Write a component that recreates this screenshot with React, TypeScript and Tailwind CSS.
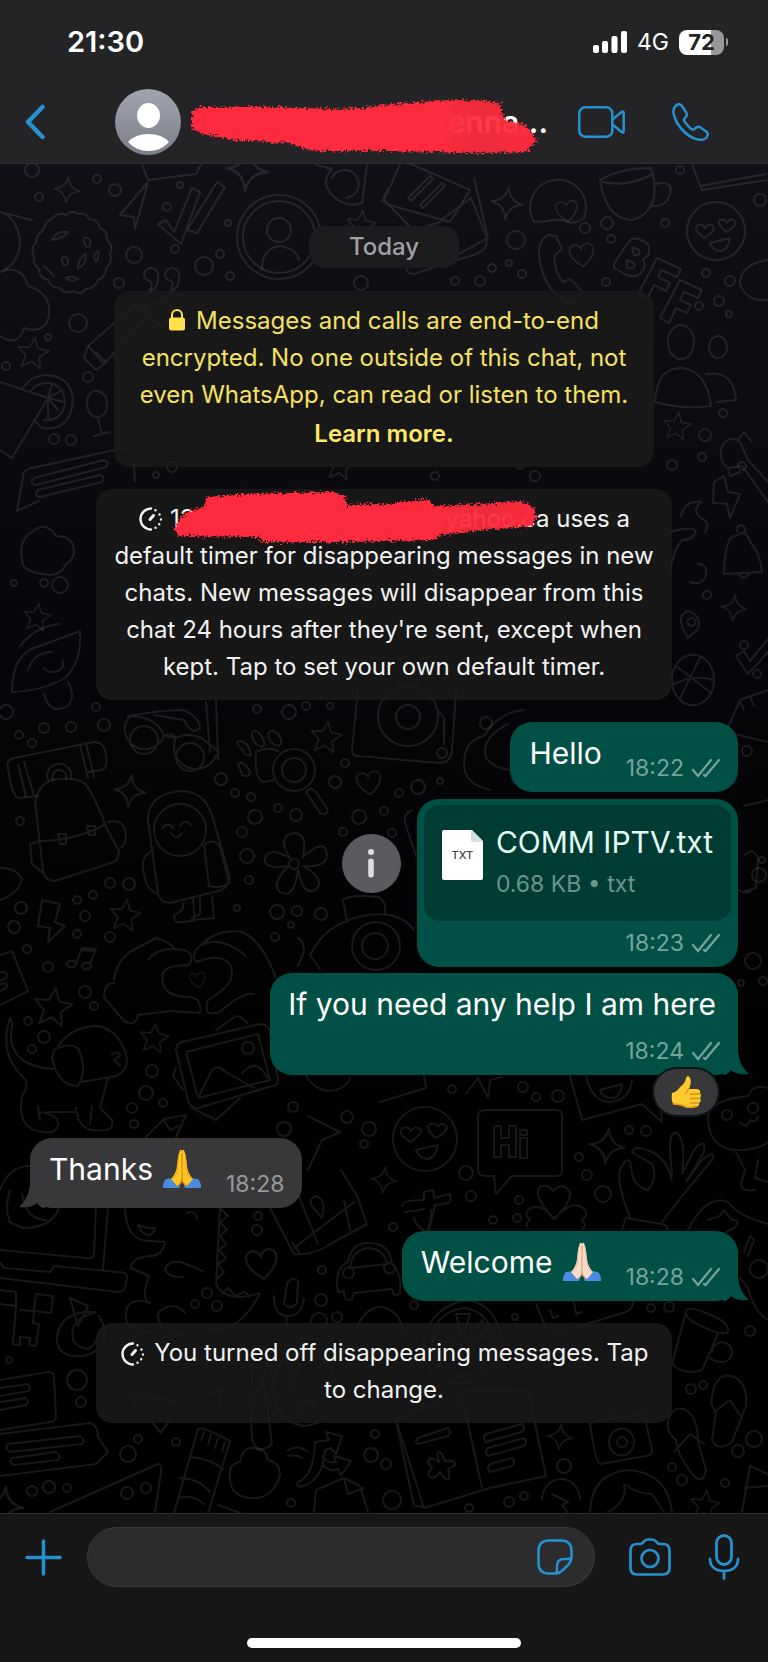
import type { ReactNode } from "react";

const STAR = "M0-18 5-6 18-5 8 4 11 17 0 10-11 17-8 4-18-5-5-6Z";
const SPARKLE = "M0-16Q2-2 16 0Q2 2 0 16Q-2 2-16 0Q-2-2 0-16Z";
const HEART = "M0 13C-18 0-15-12-7-12-3-12 0-9 0-6 0-9 3-12 7-12 15-12 18 0 0 13Z";

// x, y, radius
const bubbles = [
  [32,170,7],[97,179,4],[115,190,6],[39,197,4],[180,185,3],[167,207,4],[228,223,3],[134,255,8],[175,249,4],[204,266,9],
  [220,254,4],[230,276,4],[119,283,5],[78,323,9],[48,337,3],[6,366,4],[88,377,5],[54,439,5],[71,440,5],[156,475,3],
  [172,467,5],[14,583,3],[44,583,4],[60,585,8],[361,283,7],[455,281,4],[480,281,5],[492,268,4],[509,263,3],[522,274,4],
  [516,240,9],[585,228,5],[607,223,6],[611,239,4],[606,282,4],[665,223,4],[680,170,4],[706,273,4],[760,200,6],[730,281,5],
  [719,301,5],[699,306,4],[729,314,3],[723,413,4],[705,435,6],[702,457,4],[672,465,5],[742,466,4],[535,476,5],[520,466,3],
  [435,476,4],[707,595,4],[744,645,4],[757,674,4],[6,712,7],[19,735,4],[32,743,4],[44,728,5],[71,727,5],[104,725,6],
  [96,707,4],[221,779,6],[235,793,4],[251,797,4],[255,817,7],[278,808,4],[296,815,6],[242,832,5],[247,856,7],[249,880,4],
  [237,908,3],[277,912,7],[297,911,5],[321,914,6],[291,925,3],[275,937,4],[257,709,4],[289,712,7],[306,706,4],[330,706,3],
  [345,763,4],[335,782,6],[399,793,4],[359,817,7],[384,811,4],[343,832,4],[392,833,4],[20,821,4],[110,883,5],[129,884,6],
  [93,895,4],[77,900,4],[85,916,5],[21,908,6],[14,927,6],[77,934,4],[110,937,5],[27,949,4],[48,967,5],[85,992,6],
  [94,1006,4],[28,1021,4],[44,1037,6],[32,1049,4],[152,1071,6],[146,1093,7],[132,1108,5],[163,1103,4],[134,1124,4],[293,1107,5],
  [347,1117,6],[369,1129,7],[284,1129,7],[364,1144,4],[747,751,5],[762,860,3],[759,875,7],[753,961,8],[741,983,3],[763,981,4],
  [418,787,7],[486,723,6],[440,781,3],[452,1089,4],[523,1087,5],[536,1097,4],[558,1096,6],[629,1130,4],[646,1131,5],[579,1157,4],
  [587,1175,5],[603,1194,8],[466,1173,7],[471,1196,5],[519,1200,4],[493,1220,4],[517,1218,4],[393,1227,4],[414,1305,4],[515,1317,3],
  [651,1308,4],[669,1307,5],[759,1269,9],[750,1331,5],[691,1389,5],[703,1385,4],[258,1216,4],[257,1230,5],[207,1293,5],[195,1304,4],
  [217,1306,5],[322,1270,4],[321,1300,6],[337,1317,5],[319,1321,8],[9,1360,3],[77,1380,10],[81,1402,5],[138,1439,4],
  [128,1454,8],[176,1442,4],[32,1491,5],[49,1487,6],[67,1488,4],[127,1493,6],[146,1488,5],[375,1434,4],[371,1455,7],[386,1464,5],
  [291,1503,4],[392,1500,9],[469,1508,4],[509,1502,5],[524,1496,4],[564,1466,7],[672,1467,4],[682,1480,5],[725,1483,4],[738,1451,6],
  [754,1439,8],
];

// x, y, scale
const stars = [[33,353,0.85],[37,617,0.75],[326,737,0.85],[125,915,0.85],[53,1007,1.05],[154,1038,0.8],[677,426,0.75],[340,465,0.8],[361,225,0.8],[705,1505,0.8],[283,1372,0.9]];
const sparkles = [[67,190,0.8],[247,170,1.3],[507,203,1],[130,791,1],[734,608,0.8],[607,1146,1.1],[384,1180,0.8],[560,1437,0.8],[544,441,0.8],[4,1506,1.2]];
const hearts = [[369,783,0.9],[262,1264,1.15],[582,255,0.9],[198,980,0.6],[567,211,0.8],[160,313,1]];

const doodles = [
  // ticks, paper plane, quotes
  "M158 224l8-4 8 12 18-44 8 4-19 52zM187 230l10 3 28-46-8-5zM148 182l-28 33 14 2 1 12z",
  "M144 275a7 7 0 1 1 14 0q1 14-9 17 5-8 1-11a7 7 0 0 1-6-6zM165 275a7 7 0 1 1 14 0q1 14-9 17 5-8 1-11a7 7 0 0 1-6-6z",
  // envelope and letter
  "M402 160l-18 40 60 62 44-24-14-60M402 160l68 30-20 32-64-18M388 188l-6 14M420 205l22-22 3 3-22 22zM408 198l22-22 3 3-22 22zM440 222l-30 10-4 34q0 8 8 8l62-20q12-4 11-16l-16-40-30 22",
  // glasses at the top, handset
  "M316 165l16 4q-12 12 0 26 14 14 30 8l5-38M332 178a14 14 0 1 1 14 20M140 160l8 20 48-6 8-16M548 235q-12 6-8 28 6 28 24 36 4 6 12 2l6-10-12-12-7 3q-10-12-8-27l7-6-6-13z",
  // chat ball, mug and cake
  "M534 222a28 28 0 1 1 50-4q-8 6-16 4-10-4-20-1zM600 180q20-12 50-12 6 10 4 30-6 20-24 22-24-2-30-40zM603 182q24 6 50-8M656 184q18-4 14 10-4 14-20 12M692 164l10 26 66-10M700 186l66-12",
  // BFF
  "M628 243q3-6 11-4 12 4 10 12 0 6-6 8 4 8-2 14-6 6-16 1l-9-5q-4-2-1-7zM632 247l7 3q2 6-5 5zM627 260l7 3q2 7-7 5zM657 258l24 11-4 8-16-7-3 7 12 6-4 8-12-6-7 14-9-5zM680 280l22 10-4 8-14-6-4 8 11 5-4 8-11-5-7 15-9-5z",
  // cloud and pencil
  "M0 272q22-8 28 14 26 8 20 34-6 14-24 8-6 20-24 8M138 302l-50 44 16 18 42-46zM88 346l-4 12 12 12 8-6M96 352l10 10",
  // pizza, lemon and glass
  "M0 382l48 16-36 60-12-8M22 390q10-18 32-14 22 6 18 32-6 24-30 20l-8-8M30 392q8-12 24-8 14 8 10 24-6 14-20 12M48 398l4-14M48 398l14-8M48 398l16 4M48 398l10 12M48 398v20M88 396q-4 20 10 21 12-2 8-20-10-12-18-1zM98 418l4 16M94 436l16-4",
  // text balloons
  "M32 468l92-20q8 0 9 8l2 25M32 468q-10 2-9 9l-6 34 22-10M34 478l70-18q6 2 2 7l-70 18q-7-1-2-7zM38 490l62-15q6 2 2 7l-62 15q-7-1-2-7z",
  "M22 560q-4-20 10-28 14-12 24 4 18 0 18 16-2 10-8 12-6 14-22 10-22-2-22-14z",
  // saucer
  "M12 692q0-40 28-46l40-15q2 30-14 46-22 14-54 15zM20 646q16-20 40-22M28 670q6-18 24-18M44 694q6 22 24 12 8-10 0-24M44 668a10 8 0 1 0 18-8",
  // people
  "M668 342a13 17 0 1 1 26 0 13 17 0 1 1-26 0zM655 402q2-36 28-34 24 4 28 38-26 4-56-4zM709 346a9 11 0 1 1 18 2 9 11 0 1 1-18-2zM706 374q28-4 30 26l-20 2",
  // guitar, bolt
  "M722 446q8-12 18-4l8 18 20 22M722 446q-4 16 6 22l14-2 26 36M738 440l6-8 8 10M728 468l2 8 10-4M714 482l10-6 4 16 12 2-10 24-3-14-14-1z",
  "M664 536q16-10 32-6-2 10-14 10-10 12-12 34M698 564q10 0 8 12-4 10-16 6M681 516q4-16 20-14-10 8 0 16 10 4 4 14",
  "M724 570q2-36 12-34 10-8 14 6 10 10 12 30l-38 2zM738 532a4 4 0 1 1 6 0M738 574q6 8 12-1M688 638q-14-22 0-27 14 4 10 18zM692 618a4 4 0 1 1-1 0M736 656l8-5 6 10 18-22M736 656l12 18 20-22",
  // ball and tape
  "M672 682a20 24 0 1 1 42-4 20 24 0 1 1-42 4zM676 666l34 26M700 658l-20 40M674 684q20-10 40-4M768 690l-28 10-14 32 42 10M750 696l4 10M740 702l4 8",
  // backpack
  "M8 768q-2-8 6-10l80-16q10 0 12 12 2 14-4 16l-14 2M8 768q4 30 12 30l18-2M18 764l8 33M24 762l10 34M80 745l8 33M86 743l8 34M48 780a12 12 0 1 1 23-2M53 780a7 7 0 1 1 13-1",
  "M37 795q6-16 24-16 22-2 28 10 14 26 16 36l14 26q0 10-8 12l-56 18q-10 0-12-10l-8-70zM38 841q36 0 66-16M38 842l-8 2 2 20 10 8M108 822q16-4 18 12 0 12-6 14M58 834h8v10h-6zM87 826h8v9h-6z",
  // sunglasses
  "M128 716q34-6 56-6 16 8 16 18-8 8-16-8l-30-5M126 722a20 20 0 1 0 38 14q8-4 12 2a20 20 0 1 0 40 18l3-4-17-14q-16-6-26 0l-12-2q-8-20-34-20zM144 740m-14 0a14 14 0 1 0 28 0 14 14 0 1 0-28 0M190 757m-14 0a14 14 0 1 0 28 0 14 14 0 1 0-28 0M206 702l4 50M216 700l2 60",
  // paw and magnifier
  "M256 752q12-6 22-1M256 752q-2 28 8 30l10-2M243 750q-10-8-3-9 10 2 11 14-6 2-8-5zM252 736q0-10 9-1 6 10 1 12-8-2-10-11zM268 735q2-8 10-1 6 8 1 12-10-2-11-11zM238 764q6-4 12 8 0 6-8 3zM272 770m21 0m-20 0a21 21 0 1 0 42 0 21 21 0 1 0-42 0M282 770a12 12 0 1 0 24 0 12 12 0 1 0-24 0M306 792q4-6 10 0l12 18q-2 6-8 3z",
  // astronaut
  "M148 820q0-26 32-29 24 0 32 24l18 62q-4 14-12 14l-48 12q-10 0-12-10zM154 830a26 26 0 1 0 52 0 26 26 0 1 0-52 0M163 828q4-7 10 0M180 826q5-8 11-1M171 833q6 8 11 0M204 845q10-8 16 2l9 36q-8 6-20 3zM150 852q-10 6-6 22 2 16 14 20M184 902l-2 8-8 6q0 8 8 6l12-1v-8l-1-14M200 898v16l-8 4M212 896l2 22-22 2",
  // flower
  "M290 858q-14-22 4-25 14 0 9 24 22-20 24-3 0 14-24 12 24 14 12 24-12 6-17-20-4 30-18 22-10-8 9-26-26 4-24-8 4-12 25 0zM294 864m-5 0a5 5 0 1 0 10 0 5 5 0 1 0-10 0",
  // bolt, notes
  "M42 900l18 4-5 18 10 4-17 16 2-14-12-2zM76 964l6-16 14 1-6 15M82 950l12 1M67 964a4 3 0 1 0 9 0 4 3 0 1 0-9 0M82 966a4 3 0 1 0 9 0 4 3 0 1 0-9 0",
  // heart hands
  "M114 980q2-18 16-28l26-14q14 4 20 12M148 960q10-14 36-10 12 4 5 15-22 0-26 8-4 22 22 24 18-1 15 16l-30-2-32 4q-2 12-14 6l-20-24q0-14 10-14M202 944q16-16 40-12 20 8 34 46M202 944q-12 10-6 18l14-4q22-2 22 16 0 12-24 26-6 18 12 12 22-20 34-18M204 944q18-8 42 12",
  // telephone
  "M343 900q6-6 36-3 8 6 6 16M343 900l4 22M310 955q20-40 72-41 22 2 32 16M310 955l10 14M298 938q6 2 6 14l-6 14M352 946a24 24 0 1 0 48 0 24 24 0 1 0-48 0M362 946a13 13 0 1 0 26 0 13 13 0 1 0-26 0",
  // turntable
  "M358 690l-6 60q0 6 6 6l82 7q10 0 12-12l4-60M378 716a30 30 0 1 0 60 0 30 30 0 1 0-60 0M396 717a12 12 0 1 0 24 0 12 12 0 1 0-24 0M436 708l8 10v26M442 748a5 5 0 1 0 .1 0",
  // headphones and blanket
  "M490 790q-26-6-26-26 0-24 20-28 14-24 40-26M508 724q-28 14-22 34 8 10 24 12M412 810q-10 4-6 16l10 30",
  "M744 806l24-6M744 856q8-10 14 2l-2 30-14 4M738 890q10 6 14-1",
  "M0 868q18 0 22 12-4 14-22 20M0 955l12-4 16 40-28 14M0 972q10 0 6 6l-6 3M0 984q10-2 6 4l-6 3",
  // dog
  "M10 1018q-12 36 14 60 6 6-2 18-6 36 24 36 12 2 12-10l-2-4q-8-6-18-6M10 1018q4 4 1 14-2 34 42 37M58 1046q14-20 40-20 20 4 28 28 4 16-10 22l-34 6M54 1050q14-8 24-2 10 22 0 38-20 0-26-28zM108 1078l-8 30 12 12q2 10-8 10-26 4-28-22M92 1106l-2 18M38 1106l2 14M48 1112q10 0 26 0M112 1054q8-4 8 2l-6 4 6 6",
  // picture frame
  "M176 1050q0-6 6-8l78-18q8 0 10 8l8 48q0 6-6 6l-74 22q-8 0-10-8zM186 1052l72-18 12 46-72 18zM198 1098l14-28q6-6 14 2l28 16M242 1074q10-14 20-4l6 8M242 1048a6 6 0 1 0 12 0 6 6 0 1 0-12 0M216 1030l20-14q6 0 12 8M176 1068l-3 8 10 14M192 1108l24 12 24-22",
  "M146 1137l18-18 22-4-10 22M164 1120l6 10 8-4M308 1116l32 16-18 8-14 30M306 1076q12 18 30 14 12-4 14-12",
  // faces, Hi card
  "M393 1139a32 32 0 1 0 64 0 32 32 0 1 0-64 0M416 1150l22-5q-2 12-10 14-8 0-12-9zM410 1142q-14-10-7-14 6-2 8 3 4-6 9-2 4 4-10 13zM436 1138q-12-10-6-14 6-2 8 3 4-6 8-1 4 4-10 12z",
  "M486 1110h70q6 0 6 6v54q0 6-6 6h-44l-16 18-2-18h-8q-8 0-8-6v-54q0-6 8-6zM494 1126h7v12h8v-12h7v31h-7v-12h-8v12h-7zM520 1138h7v20h-7zM520 1130h7v5h-7z",
  "M570 1076l12 44 60-16 20 18-4-40M586 1076q6 26 24 26 20-2 22-22M600 1090l22-6q-2 14-10 14-10 0-12-8M424 1076l2 12-46 14M466 1094l12-16 10 20 2-18 12-3",
  "M402 1206q0-6 22-6v-8l9-2 1 8 16-4q2 8-2 9l-13 2-6 26M424 1209q-8 2-19 3M414 1218q2 8 12 14 6-8 5-22",
  // clover
  "M554 1219q-22-24-14-32 8-4 13 4 10-10 17 1 2 10-16 27 20-22 31-9 4 6-3 10 6 6 0 9M554 1219q-14-18-26-9-4 6 2 9-6 6-2 9",
  // ok hand
  "M630 1218q-14-36-10-48 10-22 12 4 4 14 16 16 10-12 4-26l-20-12q2-8 20 0 14 6 20 28M672 1176l-2-26q0-22 8-16 8 8 4 40l12-24q12-14 10 2l-18 30 16-22q14-12 10 0l-30 36-20 26M626 1218l36 6q6 2 6 6M626 1218l-4 12",
  // hamster, controller
  "M708 1116q2-16 40-20 4-12 20-8M708 1116q0 34 30 34 20 0 30-8M735 1150l10 20-4 14q0 8 14 6M758 1160l-3 18 13 4M740 1122q6 8 10-2 6 4 8-4M722 1115a5 5 0 1 0 10 0 5 5 0 1 0-10 0M748 1108a5 5 0 1 0 10 0 5 5 0 1 0-10 0",
  "M688 1230q18-36 40-28 10 14 40 22M708 1220l12-4 4-6 8 10q10 0 2 8l-8 4M744 1252l6-16 4 4-6 16M740 1278l8 10q6 24 20 32",
  // laptop and logo
  "M10 1222q-6-14 0-32M0 1190q10-26 34-24 28 6 27 34-4 28-38 28l-14-6M22 1194q4 26 24 26M96 1206l-2 46q0 8-8 6l-86-8M108 1206l-5 64M0 1262l4 6 46 4 4-6 64 6q12 0 8 10 0 10-8 10l-118-14M0 1290l16 2v14l-16-2M36 1294l17 2-2 17-17-2zM16 1306l-3 38 7 1v-8l10 1-1 7 7 1 3-22-6-1 1-12-14-1",
  "M96 1312q-34-2-39 24-2 22 26 20 22-4 22-28l-6-12M96 1312q-30 8-22 30 16 16 24-6M70 1298l18 8-10 20z",
  // dinosaur
  "M125 1206q0 34 24 35l16 1q-2 14-16 14-18 2-18 12l18 8q-8 24 0 26M138 1225q8 4 17 3-2 8-8 7-6-2-9-10zM220 1208l-4 76q10 20 44 9-20 40-50 36M187 1213q8-4 10 6M220 1208l8 8-8 6 7 8-7 6 6 8-7 6 7 8-8 6 6 8-6 6M165 1270q2-10 16-8l22 9M165 1270q4 8 18 7M150 1303q-26-8-24 16 2 14 34 14M185 1313q-12-14-27 0 0 22 26 22M222 1294l6-6 8 8 8-4 6 4",
  // folded map
  "M270 1208l24 46q20 2 40-12l33-18-10-28-16-26M294 1248l60-46M300 1254l-8-12M316 1211q-10-10-1-15 12 2 7 22zM318 1244l-28-70M344 1200l6 30",
  // car and mic
  "M338 1292q-4-24 10-30 4-20 20-19 22 0 24 21 10 8 8 30l-6 1-2-6-38 4-2 6q-8 4-8-8zM350 1268l38-4q-6-16-20-16-16 2-18 20zM343 1273a5 5 0 1 0 11 0 5 5 0 1 0-11 0M384 1268a5 5 0 1 0 11 0 5 5 0 1 0-11 0",
  "M284 1304l3-20q4-8 11-3l-1 22q-6 8-13 1zM274 1296q0 20 14 20 14 0 16-18M287 1316l-1 10",
  "M354 1334q10-28 28-27 20 4 21 28M424 1352q-2-40 40-52 34 2 38 44-8 38-42 40-34-4-36-32zM432 1346q-2-32 32-38 28 4 30 36-8 30-34 32-26-4-28-30zM462 1340l-6-26h14zM466 1344l16-24 8 16zM456 1344l-16-20-6 16z",
  "M536 1304l10 24q6 8 14 4l66-20q10-6 6-12M550 1310l3 8 5-2M574 1302l2 12 6-2",
  // cup
  "M686 1310q6-4 22 4 22 8 20 18-8 4-22-4-22-8-20-18zM686 1312l-14 52q12 12 30 6l16-36M712 1352a10 10 0 1 1 12 10q-10 0-14-4",
  // under the last notice
  "M127 1393l54 10-20 30zM210 1394l12-4-4 20M254 1390q-8-40 6-44 14 6 0 44zM250 1390l2 50q6 16 20 4l-8-60M274 1396q-4-40 30-44 30 4 32 40-4 32-32 34-26-4-30-30zM296 1404l20-4q-4 18-14 14z",
  "M0 1380l48-8q6 0 6 6l2 38q0 6-6 6l-50 8M0 1388l28-4q4 4 0 7l-28 5M0 1402l26-4q4 4 0 7l-26 5M0 1434l90-11q8 2 8 14l10 15-12 12-96 12M8 1444l72-8q6 4 2 8l-72 8q-6-4-2-8zM12 1458l44-6q6 4 2 8l-44 5q-6-3-2-7z",
  // sock, cloud, crossing arrows
  "M198 1429q4-3 32 12l-22 72M198 1429l-24 84M204 1432l-3 8M211 1435l-3 10M218 1438l-3 10M225 1442l-3 9M191 1457q20 2 32 12M180 1478q18 0 30 14M178 1498q14-4 26 6M50 1512l108-48q4 0 3 8l-6 40M230 1478q-2-14 10-16 4-20 20-12 6 0 8 10 12 2 12 16-8 24-30 22-20-2-20-20z",
  "M298 1482q16-6 17-40l14-2-3-8 16 4-6 18-5-6-6 2q-2 30-22 36-8 2-5-4zM288 1450q10-6 20 2M288 1456q8-2 14 2M322 1456q6 8 14 6l-2-6 17 5-10 14-3-6q-10 4-16-6",
  // journal
  "M396 1420l66-28 66-2 18 86-56 12-66 20zM396 1420l18 86 10 1M462 1396l20 92M418 1438l30-10q4 4 0 8l-30 8q-4-2 0-6zM486 1434l36-10q4 4 0 8l-36 10q-4-4 0-8zM488 1448l36-10q4 4 0 8l-36 10q-4-4 0-8zM490 1464l22-6q4 4 0 8l-22 6q-4-4 0-8zM439 1462q-4-14 3-8l3 7q10-2 10 4l-7 4q4 12-3 10l-5-7q-8 10-12 2l4-7q-8-6 0-9z",
  // camera, slippers
  "M590 1424q4-4 54-10l8 36q0 6-6 6l-46 8q-4 0-10-40zM609 1442a12 13 0 1 0 25 0 12 13 0 1 0-25 0M617 1442a5 5 0 1 0 10 0 5 5 0 1 0-10 0M606 1420l-2-8 14-2",
  "M668 1422q4-18 18-12 12 8 12 32l8 28q-2 12-10 8-18-20-20-38-10-8-8-18zM674 1452l16-18 14 10M712 1396q4-24 20-20 16 6 14 30l-14 36q-14 10-20-2l4-28q-6-6-4-16zM714 1412l16-12 12 18",
  "M542 1500a18 20 0 1 1 38 0M552 1494l16 8-6 3 6 8M590 1512q2-40 40-42 38 4 42 42M608 1512q20-10 16-28 14 10 28 10l12 18M750 1466l18 8M750 1466l-8 46M744 1488l24-2M314 1512l2-22 28-12 16 8 8 26M344 1478l4 16 16-6M218 1505l22 8",
];

function Wallpaper() {
  return (
    <svg
      viewBox="0 164 768 1349"
      preserveAspectRatio="xMidYMin slice"
      className="absolute inset-0 h-full w-full"
      fill="none"
      stroke="#fff"
      strokeOpacity="0.095"
      strokeWidth="2"
      strokeLinejoin="round"
      strokeLinecap="round"
      aria-hidden="true"
    >
      {bubbles.map(([x, y, r], i) => (
        <circle key={i} cx={x} cy={y} r={r} />
      ))}
      {stars.map(([x, y, s]) => (
        <path key={`${x}-${y}`} d={STAR} transform={`translate(${x} ${y}) rotate(8) scale(${s})`} />
      ))}
      {sparkles.map(([x, y, s]) => (
        <path key={`${x}-${y}`} d={SPARKLE} transform={`translate(${x} ${y}) rotate(6) scale(${s})`} />
      ))}
      {hearts.map(([x, y, s]) => (
        <path key={`${x}-${y}`} d={HEART} transform={`translate(${x} ${y}) rotate(-8) scale(${s})`} />
      ))}
      {/* cookie */}
      <path d="M52 219q6-8 14-4 6-6 12-1 8-2 11 5 9 0 11 9 8 3 7 12 7 6 3 14 3 9-4 14 0 9-8 12-3 9-12 9-6 7-13 2-8 4-13-3-9 0-12-8-9-2-9-11-7-5-5-13-4-8 2-13 0-9 7-12 1-9 9-12z" />
      <path d="M52 240q4-10 16-8-4 6-16 8zM84 238q8-2 6 8-6 4-6-8zM62 258q6-4 6 6-6 4-6-6zM78 268q0-10 8-14 0 12-8 14zM94 256q6-10 4 2-2 8-4-2zM66 278q6-3 12 1-6 4-12-1zM44 266l10 10" />
      <path d="M0 212q16 4 20 28 0 22-16 30M0 212l32 8M768 260q-28 4-28 24 6 18 28 16" />
      {/* contact badge */}
      <circle cx="279" cy="237" r="42" />
      <circle cx="279" cy="237" r="36" />
      <circle cx="279" cy="230" r="12" />
      <path d="M262 269q0-21 18-23 16 2 19 14" />
      {/* love eyes */}
      <circle cx="716" cy="231" r="29" />
      <path d="M710 243l20-5q-2 12-9 13-8 0-11-8zM704 238q-12-9-6-13 5-2 7 3 4-6 8-2 4 4-9 12zM726 232q-10-9-6-12 5-2 7 3 4-6 7-2 4 4-8 11z" />
      {doodles.map((d, i) => (
        <path key={i} d={d} />
      ))}
    </svg>
  );
}

function Ticks() {
  return (
    <svg viewBox="0 0 28 20" className="h-5 w-7" fill="none" stroke="currentColor" strokeWidth="2.2" strokeLinecap="round" role="img" aria-label="Delivered">
      <path d="M1 12l5 6L19 2M12 17l1.500 1L27 2" />
    </svg>
  );
}

function TimerIcon() {
  return (
    <svg viewBox="0 0 24 24" className="inline-block h-6 w-6 shrink-0" fill="none" stroke="currentColor" strokeWidth="2.400" strokeLinecap="round" aria-hidden="true">
      <path d="M13 1.500a10.500 10.500 0 1 0 0 21" />
      <path d="M12 12.500l3.500-4" strokeWidth="3" />
      <path d="M17.500 3.200v0M21.500 7.500v0M23 12.500v0M21.200 17.200v0M17.500 20.800v0" />
    </svg>
  );
}

function Pray({ light = false }: { light?: boolean }) {
  const skin = light ? "#fbdcc5" : "#fdc526";
  const shade = light ? "#d9a58a" : "#df8b06";
  const edge = light ? "#eebfa3" : "#f4a90d";
  return (
    <svg viewBox="0 0 40 40" className="-my-1 h-10 w-10" role="img" aria-label="Folded hands">
      <path d="M1 38q0-5 3-8l8-1 6 8-1 2H1z" fill="#4a8be0" />
      <path d="M39 38q0-5-3-8l-8-1-6 8 1 2h16z" fill="#4a8be0" />
      <path d="M18 1q2-1 2 2v27q-1 5-5 7l-6-7q5-5 6-13 1-11 3-16z" fill={skin} />
      <path d="M22 1q-2-1-2 2v27q1 5 5 7l6-7q-5-5-6-13-1-11-3-16z" fill={skin} />
      <path d="M20 4v25M15 37q5-2 5-8 0 6 5 8" fill="none" stroke={shade} strokeWidth="1.200" />
      <path d="M17 5q-1 6-1 13-1 8-5 12M23 5q1 6 1 13 1 8 5 12" fill="none" stroke={edge} strokeWidth="1" />
    </svg>
  );
}

function ThumbsUp() {
  return (
    <svg viewBox="0 0 32 32" className="h-8 w-8" role="img" aria-label="Thumbs up">
      <path d="M2 17q-1 7 1 11 8 0 13 3 5 1 10 0 4-1 3-4 3-2 1-5 2-3 0-5 1-4-4-4h-7q3-7 1-11-2-4-4 0-1 6-6 9-3 5-8 6z" fill="#fdcb2d" />
      <path d="M20 18h10M20 22.500h10M20 27h9M19 13q-3 2-3 5" fill="none" stroke="#dd8f14" strokeWidth="1.300" />
      <path d="M3 28q8 0 13 3 6 1 11-1" fill="none" stroke="#e89b17" strokeWidth="1.500" />
    </svg>
  );
}

function Stamp({ time, ticks = true }: { time: string; ticks?: boolean }) {
  return (
    <span className="flex items-center gap-2 text-[23px] leading-[22px]">
      <time>{time}</time>
      {ticks && <Ticks />}
    </span>
  );
}

function Tail({ side }: { side: "left" | "right" }) {
  return (
    <svg
      viewBox="0 0 26 26"
      className={
        side === "right"
          ? "absolute -right-[11px] bottom-0 h-[26px] w-[26px] fill-[#005045]"
          : "absolute -left-[11px] bottom-0 h-[26px] w-[26px] -scale-x-100 fill-[#38383a]"
      }
      aria-hidden="true"
    >
      <path d="M0 26V0H15C15 11 20 20 26 25C19 26 12 25 8 21C6 24 3 26 0 26Z" />
    </svg>
  );
}

function Bubble({ mine = true, tail = false, className, children }: { mine?: boolean; tail?: boolean; className: string; children: ReactNode }) {
  return (
    <div
      className={
        (mine ? "self-end bg-[#005045] text-[#78a39c] " : "self-start bg-[#38383a] text-[#98989d] ") +
        "relative rounded-[22px] " +
        className
      }
    >
      {tail && <Tail side={mine ? "right" : "left"} />}
      {children}
    </div>
  );
}

const line = "flex items-end gap-6 pt-[13px] pb-[13px] pr-[18px] pl-[19px]";
const body = "text-[30px] leading-9 text-white";
const notice = "self-center rounded-2xl bg-[#1c1c1c]/80 text-center text-2xl leading-[37px]";

function Scribble({ d, id, viewBox, className }: { d: string; id: string; viewBox: string; className: string }) {
  return (
    <svg viewBox={viewBox} className={className} aria-hidden="true">
      <filter id={id} x="-5%" y="-20%" width="110%" height="140%">
        <feTurbulence type="fractalNoise" baseFrequency="0.45" numOctaves="3" seed="4" />
        <feDisplacementMap in="SourceGraphic" scale="9" xChannelSelector="R" yChannelSelector="G" />
      </filter>
      {/* the marker is thinner towards the right end */}
      <linearGradient id={`${id}-ink`}>
        <stop offset="0.7" stopColor="#ff2b3d" />
        <stop offset="0.85" stopColor="#ff2b3d" stopOpacity="0.92" />
        <stop offset="1" stopColor="#ff2b3d" />
      </linearGradient>
      <path d={d} fill={`url(#${id}-ink)`} filter={`url(#${id})`} />
    </svg>
  );
}

function Header() {
  return (
    <header className="border-b border-[#2f2f32] bg-[#242426] pb-[3px]">
      <div className="flex h-[84px] items-center justify-between pr-10 pl-[67px] text-white">
        <time className="text-[29px] font-semibold">21:30</time>
        <div className="flex items-center gap-[10px]">
          <svg viewBox="0 0 34 22" className="h-[22px] w-[34px]" fill="currentColor" role="img" aria-label="Signal">
            <rect x="0" y="14" width="6" height="8" rx="2" />
            <rect x="9" y="10" width="6" height="12" rx="2" />
            <rect x="18.500" y="5" width="6" height="17" rx="2" />
            <rect x="28" y="0" width="6" height="22" rx="2" />
          </svg>
          <span className="text-[23px]">4G</span>
          <div className="flex items-center gap-[2px]">
            <span className="flex h-[25px] w-[45px] items-center justify-center rounded-lg bg-linear-to-r from-white from-72% to-[#98989b] to-72% text-[22px] font-bold text-[#242426]">
              72
            </span>
            <span className="h-2 w-[2px] rounded-r-full bg-[#98989b]" />
          </div>
        </div>
      </div>
      <div className="flex h-[76px] items-center pr-[59px] pl-[25px] text-[#2591cf]">
        <button type="button" aria-label="Back">
          <svg viewBox="0 0 20 36" className="h-9 w-5" fill="none" stroke="currentColor" strokeWidth="4.500" strokeLinecap="round" strokeLinejoin="round">
            <path d="M17.500 3L3 18l14.500 15" />
          </svg>
        </button>
        <svg viewBox="0 0 66 66" className="ml-[70px] h-[66px] w-[66px]" role="img" aria-label="Contact">
          <linearGradient id="avatar" x2="0" y2="1">
            <stop stopColor="#a2a5b0" />
            <stop offset="1" stopColor="#7b7e88" />
          </linearGradient>
          <circle cx="33" cy="33" r="33" fill="url(#avatar)" />
          <ellipse cx="33.500" cy="26.500" rx="11.500" ry="12.500" fill="#fff" />
          <path d="M13 53q7-8 20.500-8T54 53q-8 9-20.500 9T13 53z" fill="#fff" />
        </svg>
        <h1 className="relative ml-[10px] flex h-[66px] flex-1 items-center text-[30px] font-semibold text-white">
          <span className="flex w-[357px] justify-end">kenna...</span>
          <Scribble
            id="rough-a"
            viewBox="0 0 350 66"
            className="absolute top-0 left-0 h-[66px] w-[350px] overflow-visible"
            d="M1 23L9 18 89 18 140 20 174 19 193 16 230 13 260 11 299 12 309 15 313 30 334 36 340 43 347 53 338 57 337 63 288 64 193 62 129 62 114 60 99 54 44 51 9 44 1 39Z"
          />
        </h1>
        <button type="button" aria-label="Video call">
          <svg viewBox="0 0 47 32" className="h-8 w-[47px]" fill="none" stroke="currentColor" strokeWidth="2.500" strokeLinejoin="round">
            <rect x="1.300" y="1.300" width="33" height="29.400" rx="6" />
            <path d="M34.500 13.500l9-7.500q2.200-1.200 2.200 1v18q0 2.200-2.200 1l-9-7.500" />
          </svg>
        </button>
        <button type="button" aria-label="Voice call" className="ml-[47px]">
          <svg viewBox="0 0 37 38" className="h-[38px] w-[37px]" fill="none" stroke="currentColor" strokeWidth="2.500" strokeLinejoin="round">
            <path d="M6 1.500C3 2.500 1 6 1.400 9.500 2.500 17 7 24 13 29.500c5 4.500 10 7 15.500 7.300 3.500.2 6.500-2 7.200-4.800.3-1.500-.2-2.500-1.200-3.300l-6-4.200c-1.500-1-3.200-.8-4.500.2l-2 1.500c-1 .6-1.800.5-2.700-.2-3-2.400-5-4.800-7-7.700-.6-1-.6-1.800.2-2.700l1.500-1.800c1-1.300 1-2.800.2-4.300L9.500 2.500C8.600 1.300 7.400 1 6 1.500z" />
          </svg>
        </button>
      </div>
    </header>
  );
}

function Composer() {
  return (
    <footer className="border-t border-[#2e2e2e] bg-[#171717] pb-[15px] text-[#2591cf]">
      <div className="flex items-center pt-[13px] pr-7 pl-[25px]">
        <button type="button" aria-label="Attach">
          <svg viewBox="0 0 37 37" className="h-[37px] w-[37px]" stroke="currentColor" strokeWidth="3.500" strokeLinecap="round">
            <path d="M18.500 2v33M2 18.500h33" />
          </svg>
        </button>
        <div className="ml-[25px] flex h-[60px] min-w-0 flex-1 items-center rounded-[30px] border border-[#39393b] bg-[#2c2c2e] pr-[21px] pl-6">
          <input type="text" aria-label="Message" className="min-w-0 flex-1 bg-transparent text-[30px] text-white outline-none" />
          <button type="button" aria-label="Stickers">
            <svg viewBox="0 0 36 36" className="h-9 w-9" fill="none" stroke="currentColor" strokeWidth="2.500" strokeLinejoin="round">
              <path d="M19 34.500H12Q1.500 34.500 1.500 24V12Q1.500 1.500 12 1.500H24Q34.500 1.500 34.500 12V19Q34 23 31 26L26 31Q23 34 19 34.500ZM19 34.500Q20 33 20 27Q20 20 27 20Q33 20 34.500 19" />
            </svg>
          </button>
        </div>
        <button type="button" aria-label="Camera" className="ml-[34px]">
          <svg viewBox="0 0 42 38" className="h-[38px] w-[42px]" fill="none" stroke="currentColor" strokeWidth="2.700" strokeLinejoin="round">
            <path d="M8 6h3q2 0 3-1.500l1-1Q16.500 1.500 19 1.500h4q2.500 0 4 2l1 1Q29 6 31 6h3q6.500 0 6.500 6.500V30q0 6.500-6.500 6.500H8Q1.500 36.500 1.500 30V12.500Q1.500 6 8 6z" />
            <circle cx="21" cy="20.500" r="8.500" />
          </svg>
        </button>
        <button type="button" aria-label="Record voice message" className="ml-[37px]">
          <svg viewBox="0 0 32 46" className="h-[46px] w-8" fill="none" stroke="currentColor" strokeWidth="2.800" strokeLinecap="round">
            <rect x="8.500" y="1.500" width="15" height="29" rx="7.500" />
            <path d="M2 25c0 8 6 12 14 12s14-4 14-12M16 37v7.500" />
          </svg>
        </button>
      </div>
      <div className="mx-auto mt-[51px] h-[10px] w-[274px] rounded-full bg-white" />
    </footer>
  );
}

export default function App() {
  return (
    <div className="flex min-h-screen flex-col bg-[#171717] font-['Inter','Liberation_Sans',sans-serif]">
      <Header />
      <main className="relative flex-1 overflow-hidden bg-linear-to-b from-[#101016] via-[#050508] via-45% to-black">
        <Wallpaper />
        <div className="relative flex flex-col px-[30px] pt-[62px] pb-[90px]">
          <h2 className="self-center rounded-2xl bg-[#1c1c1f] px-10 text-2xl leading-[42px] font-medium text-[#a0a0a5]">Today</h2>

          <p className={`${notice} mt-[23px] px-[26px] pt-[11px] pb-[13px] text-[#f6e165]`}>
            <svg viewBox="0 0 16 22" className="mr-[11px] mb-1 inline-block h-[22px] w-4 fill-[#ffe14d]" aria-hidden="true">
              <rect x="0" y="8.500" width="16" height="13" rx="2.500" />
              <path d="M3 10V6a5 5 0 0 1 10 0v4" fill="none" stroke="#ffe14d" strokeWidth="2" />
            </svg>
            Messages and calls are end-to-end
            <br />
            encrypted. No one outside of this chat, not
            <br />
            even WhatsApp, can read or listen to them.
            <a href="#learn-more" className="block pt-[1px] leading-10 font-semibold text-[#ffe76a]">Learn more.</a>
          </p>

          <div className={`${notice} mt-[22px] px-[18px] pt-[11px] pb-[15px] text-[#f2f2f2]`}>
            <div className="relative mx-auto flex w-[492px] items-center">
              <TimerIcon />
              <span className="ml-2">13/12</span>
              <span className="ml-auto">@yahoo.ca uses a</span>
              <Scribble
                id="rough-b"
                viewBox="138 500 492 37"
                className="absolute inset-0 h-full w-full overflow-visible"
                d="M174 528L185 513 204 507 207 497 247 494 335 492 345 497 347 505 388 504 426 499 436 506 480 504 520 501 532 506 537 517 532 526 482 530 440 535 434 540 344 542 264 542 258 537 178 536Z"
              />
            </div>
            <p>
              default timer for disappearing messages in new
              <br />
              chats. New messages will disappear from this
              <br />
              chat 24 hours after they're sent, except when
              <br />
              kept. Tap to set your own default timer.
            </p>
          </div>

          <Bubble className={`${line} mt-[22px]`}>
            <p className={`${body} mb-[8px]`}>Hello</p>
            <Stamp time="18:22" />
          </Bubble>

          <div className="mt-[7px] flex items-center gap-4 self-end">
            <button type="button" aria-label="Info" className="mt-[-40px] flex h-[59px] w-[59px] items-center justify-center rounded-full bg-[#5b5a5e]">
              <svg viewBox="0 0 8 30" className="h-[30px] w-2 fill-[#dedee0]">
                <circle cx="4" cy="4" r="3" />
                <rect x="1.200" y="10.500" width="5.600" height="19" rx="2.800" />
              </svg>
            </button>
            <Bubble className="flex flex-col px-[7px] pt-[6px] pb-[13px]">
              <div className="flex items-start gap-[13px] rounded-2xl bg-[#003c33] pt-[19px] pr-[18px] pb-[23px] pl-[18px]">
                <div className="relative mt-[6px]">
                  <svg viewBox="0 0 41 50" className="h-[50px] w-[41px]" aria-hidden="true">
                    <path d="M2 0H30L41 11V48q0 2-2 2H2q-2 0-2-2V2Q0 0 2 0z" fill="#fff" />
                    <path d="M29 0L41 12H31q-2 0-2-2z" fill="#d8dcdc" />
                  </svg>
                  <span className="absolute inset-x-0 top-[19px] text-center text-[11px] leading-3 font-medium text-[#444]">TXT</span>
                </div>
                <div>
                  <p className="text-[30px] leading-9 text-[#e4fbf6]">COMM IPTV.txt</p>
                  <p className="mt-[10px] text-[23px] leading-7 text-[#6b958e]">0.68 KB • txt</p>
                </div>
              </div>
              <div className="mt-[11px] self-end pr-[11px]">
                <Stamp time="18:23" />
              </div>
            </Bubble>
          </div>

          <Bubble tail className="mt-[6px] flex flex-col pt-[13px] pr-[18px] pb-[13px] pl-[18px]">
            <p className={`${body} pr-1`}>If you need any help I am here</p>
            <div className="mt-[18px] self-end">
              <Stamp time="18:24" />
            </div>
            <span className="absolute right-5 -bottom-10 flex h-[46px] w-[64px] items-center justify-center rounded-full bg-[#38383a] ring-2 ring-[#0b1414]">
              <ThumbsUp />
            </span>
          </Bubble>

          <Bubble mine={false} tail className={`${line} mt-[63px]`}>
            <p className={`${body} mb-[8px] flex items-center gap-[9px]`}>
              Thanks <Pray />
            </p>
            <Stamp time="18:28" ticks={false} />
          </Bubble>

          <Bubble tail className={`${line} mt-[23px]`}>
            <p className={`${body} mb-[8px] flex items-center gap-[9px]`}>
              Welcome <Pray light />
            </p>
            <Stamp time="18:28" />
          </Bubble>

          <p className={`${notice} mt-[22px] px-6 pt-[11px] pb-[15px] text-[#f2f2f2]`}>
            <span className="mr-1">
              <TimerIcon />
            </span>{" "}
            You turned off disappearing messages. Tap
            <br />
            to change.
          </p>
        </div>
      </main>
      <Composer />
    </div>
  );
}
